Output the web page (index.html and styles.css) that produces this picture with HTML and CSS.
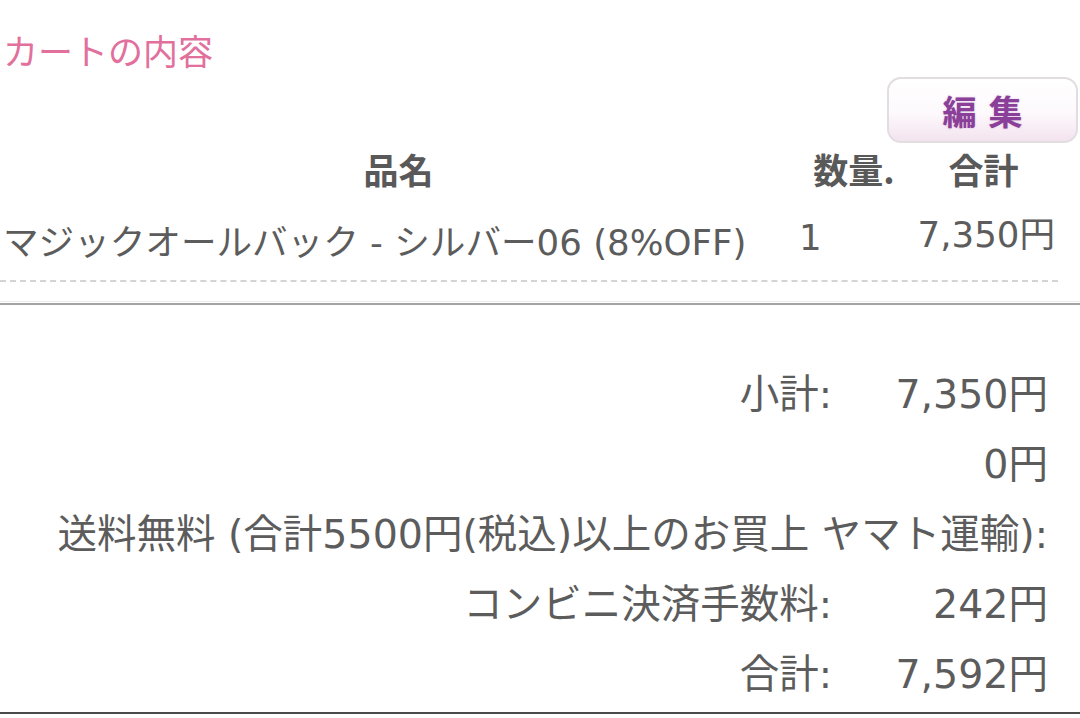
FILE: index.html
```html
<!DOCTYPE html>
<html lang="ja">
<head>
<meta charset="utf-8">
<title>カートの内容</title>
<link rel="stylesheet" href="styles.css">
</head>
<body>
<div class="page">
  <h1 class="title">カートの内容</h1>
  <div class="toolbar"><button class="edit">編集</button></div>
  <div class="cart">
    <div class="row head">
      <div class="c-name">品名</div>
      <div class="c-qty">数量.</div>
      <div class="c-total">合計</div>
    </div>
    <div class="row item">
      <div class="c-name">マジックオールバック - シルバー06 (8%OFF)</div>
      <div class="c-qty">1</div>
      <div class="c-total">7,350円</div>
    </div>
  </div>
  <div class="dash"></div>
  <div class="rule"></div>
  <div class="summary">
    <div class="s-label">小計:</div><div class="s-val">7,350円</div>
    <div class="s-label"></div><div class="s-val">0円</div>
    <div class="s-wide">送料無料 (合計5500円(税込)以上のお買上 ヤマト運輸):</div>
    <div class="s-label">コンビニ決済手数料:</div><div class="s-val">242円</div>
    <div class="s-label">合計:</div><div class="s-val">7,592円</div>
  </div>
  <div class="bottom"></div>
</div>
</body>
</html>
```
FILE: styles.css
```css
* { box-sizing: border-box; }
html, body { margin: 0; padding: 0; background: #fff; }
body {
  font-family: "DejaVu Sans", "Noto Sans CJK JP", sans-serif;
  color: #5c5c5c;
  width: 1080px;
  height: 718px;
  overflow: hidden;
}
.page { width: 1080px; }
.title {
  margin: 30px 0 0 3px;
  font-family: "Noto Sans CJK JP", sans-serif;
  font-size: 35px;
  line-height: 40px;
  height: 40px;
  font-weight: 400;
  color: #e2709c;
}
.toolbar {
  display: flex;
  justify-content: flex-end;
  margin-top: 7px;
  padding-right: 2px;
}
.edit {
  width: 191px;
  height: 66px;
  border: 2px solid #e2dde0;
  border-radius: 14px;
  background: linear-gradient(#ffffff 0%, #fdf9fc 55%, #f3e3ee 100%);
  font-family: "Noto Sans CJK JP", sans-serif;
  font-size: 34px;
  font-weight: 700;
  letter-spacing: 12px;
  padding: 0 0 0 12px;
  color: #8a3f98;
  text-shadow: 0 0 2px rgba(160, 80, 170, 0.35);
}
.cart { width: 1058px; }
.row {
  display: grid;
  grid-template-columns: 797px 116px 145px;
  line-height: 40px;
}
.head {
  margin-top: 6px;
  font-family: "Noto Sans CJK JP", sans-serif;
  font-size: 35px;
  font-weight: 700;
  color: #595959;
}
.head .c-name { text-align: center; }
.head .c-qty { text-align: center; padding-right: 2px; }
.head .c-total { text-align: center; padding-right: 4px; }
.item { margin-top: 34px; font-size: 35.6px; }
.item .c-name { padding-left: 3px; white-space: nowrap; }
.item .c-qty { padding-left: 2px; margin-top: -5px; }
.item .c-total { text-align: right; padding-right: 3px; margin-top: -8px; white-space: nowrap; }
.dash {
  margin-top: 17px;
  width: 1058px;
  height: 0;
  border-top: 2px dashed #d4d4d4;
}
.rule {
  margin-top: 19px;
  height: 4px;
  border-top: 1px solid #ececec;
  border-bottom: 2px solid #a3a3a3;
}
.summary {
  margin-top: 54px;
  width: 1048px;
  display: grid;
  grid-template-columns: 1fr 216px;
  grid-auto-rows: 70px;
  align-items: center;
  font-size: 39.5px;
  line-height: 44px;
}
.s-label { text-align: right; white-space: nowrap; }
.s-val { text-align: right; white-space: nowrap; }
.s-wide { grid-column: 1 / 3; text-align: right; white-space: nowrap; }
.bottom {
  margin-top: 3px;
  height: 2px;
  background: #4a4a4a;
}
```
